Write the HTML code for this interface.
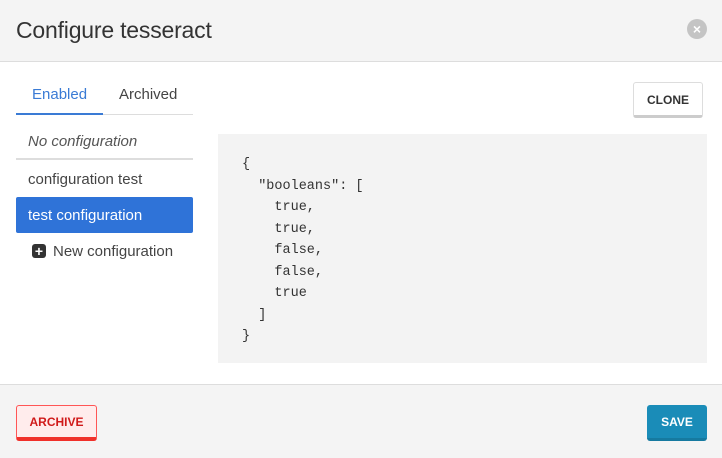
<!DOCTYPE html>
<html><head><style>
*{box-sizing:border-box;margin:0;padding:0}
body{width:722px;height:458px;font-family:"Liberation Sans",sans-serif;background:#fff;position:relative;overflow:hidden;color:#444}
.hdr{position:absolute;left:0;top:0;width:722px;height:62px;background:#f4f4f4;border-bottom:1px solid #ddd}
.hdr h1{position:absolute;left:16px;top:17px;font-weight:normal;font-size:23px;color:#333;letter-spacing:-0.2px}
.x{position:absolute;left:687px;top:19px;width:20px;height:20px;border-radius:50%;background:#c4c4c4;color:#fff;font-size:14px;font-weight:bold;text-align:center;line-height:20px}
.abs{position:absolute}
.tab{font-size:15px}
.code{position:absolute;left:218px;top:134px;width:489px;height:229px;background:#f3f3f3;font-family:"Liberation Mono",monospace;font-size:13.5px;line-height:21.5px;color:#333;padding:20px 0 0 24px;white-space:pre}
.ftr{position:absolute;left:0;top:384px;width:722px;height:74px;background:#f4f4f4;border-top:1px solid #ddd}
.btn{position:absolute;font-size:12px;font-weight:bold;text-align:center;border-radius:3px}
</style></head><body>
<div class="hdr"><h1>Configure tesseract</h1><div class="x">×</div></div>
<div class="abs tab" style="left:32px;top:86px;color:#3a7bd5">Enabled</div>
<div class="abs tab" style="left:119px;top:86px;color:#444">Archived</div>
<div class="abs" style="left:16px;top:114px;width:177px;height:1px;background:#ddd"></div>
<div class="abs" style="left:16px;top:113px;width:87px;height:2px;background:#3a7bd5"></div>
<div class="abs" style="left:28px;top:133px;font-size:15px;font-style:italic;color:#555">No configuration</div>
<div class="abs" style="left:16px;top:158px;width:177px;height:2px;background:#ddd"></div>
<div class="abs" style="left:28px;top:171px;font-size:15px;color:#444">configuration test</div>
<div class="abs" style="left:16px;top:197px;width:177px;height:36px;background:#2f73d8;border-radius:2px;color:#fff;font-size:15px;padding:10px 0 0 12px">test configuration</div>
<div class="abs" style="left:32px;top:244px;width:14px;height:14px;background:#333;border-radius:3px;color:#fff;font-size:14px;font-weight:bold;line-height:14px;text-align:center">+</div>
<div class="abs" style="left:53px;top:243px;font-size:15px;color:#444">New configuration</div>
<div class="btn" style="left:633px;top:82px;width:70px;height:36px;background:#fff;border:1px solid #ddd;border-bottom:3px solid #ccc;line-height:34px;color:#333">CLONE</div>
<div class="code">{
  "booleans": [
    true,
    true,
    false,
    false,
    true
  ]
}</div>
<div class="ftr"></div>
<div class="btn" style="left:16px;top:405px;width:81px;height:36px;background:#ffecec;border:1px solid #f55;border-bottom:4px solid #f0302a;line-height:32px;color:#d01a1a">ARCHIVE</div>
<div class="btn" style="left:647px;top:405px;width:60px;height:36px;background:#1a8cb8;border-bottom:3px solid #167aa0;line-height:34px;color:#fff">SAVE</div>
</body></html>
